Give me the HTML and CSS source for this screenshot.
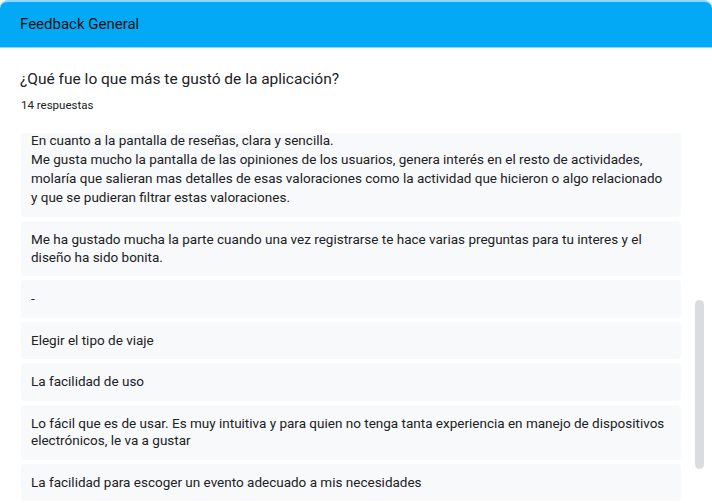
FILE: index.html
```html
<!DOCTYPE html>
<html lang="es">
<head>
<meta charset="utf-8">
<title>Feedback General</title>
<link rel="stylesheet" href="styles.css">
</head>
<body>
<header class="topbar">
  <h1 class="topbar-title">Feedback General</h1>
</header>
<main class="content">
  <h2 class="question">¿Qué fue lo que más te gustó de la aplicación?</h2>
  <p class="count">14 respuestas</p>
  <div class="scroller">
    <div class="list">
      <div class="answer answer-long">En cuanto a la pantalla de reseñas, clara y sencilla.<br>Me gusta mucho la pantalla de las opiniones de los usuarios, genera interés en el resto de actividades, molaría que salieran mas detalles de esas valoraciones como la actividad que hicieron o algo relacionado y que se pudieran filtrar estas valoraciones.</div>
      <div class="answer">Me ha gustado mucha la parte cuando una vez registrarse te hace varias preguntas para tu interes y el diseño ha sido bonita.</div>
      <div class="answer">-</div>
      <div class="answer">Elegir el tipo de viaje</div>
      <div class="answer">La facilidad de uso</div>
      <div class="answer">Lo fácil que es de usar. Es muy intuitiva y para quien no tenga tanta experiencia en manejo de dispositivos electrónicos, le va a gustar</div>
      <div class="answer">La facilidad para escoger un evento adecuado a mis necesidades</div>
    </div>
    <div class="thumb"></div>
  </div>
</main>
</body>
</html>
```

FILE: styles.css
```css
* { box-sizing: border-box; }
html, body { margin: 0; padding: 0; background: #ffffff; }
body {
  font-family: Roboto, "Liberation Sans", Arial, sans-serif;
  color: #202124;
  width: 712px;
  height: 503px;
  overflow: hidden;
}
.topbar {
  height: 48px;
  background: #03a9f4;
  border-top: 2px solid #8fd6fb;
  border-bottom: 1px solid #8fd6fb;
  border-radius: 8px 8px 0 0;
  display: flex;
  align-items: center;
  padding: 0 20px 1px;
}
.topbar-title {
  margin: 0;
  font-size: 15px;
  font-weight: 400;
  color: #121212;
}
.content {
  padding: 21px 0 0 20px;
}
.question {
  margin: 0;
  font-size: 15.5px;
  font-weight: 400;
  line-height: 20px;
  color: #202124;
}
.count {
  margin: 9px 0 0 1px;
  font-size: 11.5px;
  line-height: 14px;
  color: #202124;
}
.scroller {
  position: relative;
  margin-top: 21px;
  height: 370px;
  overflow: hidden;
}
.list {
  margin-top: -12px;
  margin-left: 1px;
  width: 660px;
  display: flex;
  flex-direction: column;
  gap: 4px;
}
.answer {
  background: #f8f9fa;
  border-radius: 4px;
  padding: 10px 10px;
  font-size: 13.5px;
  line-height: 17.5px;
  color: #202124;
}
.answer-long { line-height: 19px; }
.thumb {
  position: absolute;
  left: 675px;
  top: 167px;
  width: 9px;
  height: 169px;
  border-radius: 5px;
  background: #dadce0;
}
```
